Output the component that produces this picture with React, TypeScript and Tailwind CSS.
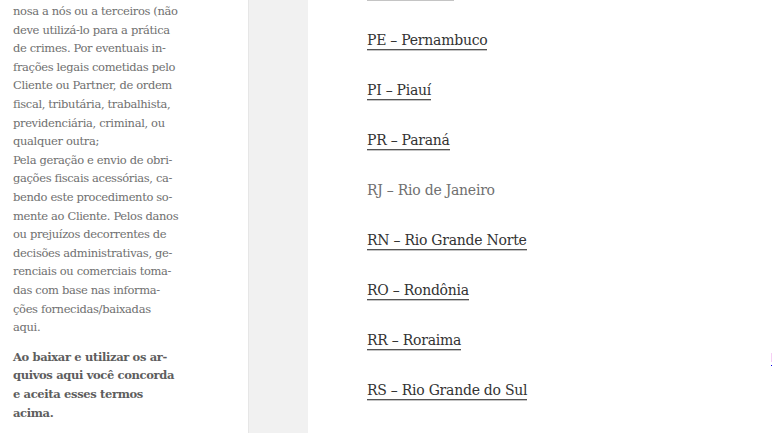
const serif = "font-['DejaVu_Serif','Liberation_Serif',serif]";

const terms = [
  "nosa a nós ou a terceiros (não",
  "deve utilizá-lo para a prática",
  "de crimes. Por eventuais in-",
  "frações legais cometidas pelo",
  "Cliente ou Partner, de ordem",
  "fiscal, tributária, trabalhista,",
  "previdenciária, criminal, ou",
  "qualquer outra;",
  "Pela geração e envio de obri-",
  "gações fiscais acessórias, ca-",
  "bendo este procedimento so-",
  "mente ao Cliente. Pelos danos",
  "ou prejuízos decorrentes de",
  "decisões administrativas, ge-",
  "renciais ou comerciais toma-",
  "das com base nas informa-",
  "ções fornecidas/baixadas",
  "aqui.",
];

const agree = ["Ao baixar e utilizar os ar-", "quivos aqui você concorda", "e aceita esses termos", "acima."];

const states: { label: string; link: boolean }[] = [
  { label: "PB – Paraíba", link: true },
  { label: "PE – Pernambuco", link: true },
  { label: "PI – Piauí", link: true },
  { label: "PR – Paraná", link: true },
  { label: "RJ – Rio de Janeiro", link: false },
  { label: "RN – Rio Grande Norte", link: true },
  { label: "RO – Rondônia", link: true },
  { label: "RR – Roraima", link: true },
  { label: "RS – Rio Grande do Sul", link: true },
  { label: "SC – Santa Catarina", link: true },
];

function Sidebar() {
  return (
    <aside className={`w-[248px] shrink-0 bg-white pl-[13px] ${serif}`}>
      <div className="mt-[2px] text-[11.5px] leading-[18.6px] tracking-[-0.35px] text-[#707070]">
        {terms.map((l) => (
          <div key={l} className="whitespace-nowrap">
            {l}
          </div>
        ))}
      </div>
      <div className="mt-[11px] text-[11.5px] font-bold leading-[18.8px] tracking-[-0.35px] text-[#5e5e5e]">
        {agree.map((l) => (
          <div key={l} className="whitespace-nowrap">
            {l}
          </div>
        ))}
      </div>
    </aside>
  );
}

function StateList() {
  return (
    <main className={`flex w-[461px] shrink-0 flex-col pl-[59px] ${serif}`}>
      <div className="-mt-[22px] flex flex-col">
        {states.map((s) => (
          <p key={s.label} className="mb-[25px] text-[14px] leading-[25px] tracking-[-0.25px] whitespace-nowrap">
            {s.link ? (
              <a className="border-b border-[#555] pb-[1px] text-[#333] shadow-[0_1px_0_#c4c4c4]">{s.label}</a>
            ) : (
              <span className="text-[#707070]">{s.label}</span>
            )}
          </p>
        ))}
      </div>
    </main>
  );
}

export default function App() {
  return (
    <div className="flex h-[433px] w-[772px] overflow-hidden bg-white">
      <Sidebar />
      <div className="w-px shrink-0 bg-[#e6e6e6]" />
      <div className="w-[59px] shrink-0 bg-[#f1f1f1]" />
      <StateList />
      <div className="shrink-0 pl-[2px] pt-[344px]">
        <a className="border-b border-[#0000ee] font-['Liberation_Sans',sans-serif] text-[13px] font-bold leading-[13px] text-[#0000ee]">
          Links
        </a>
      </div>
    </div>
  );
}
